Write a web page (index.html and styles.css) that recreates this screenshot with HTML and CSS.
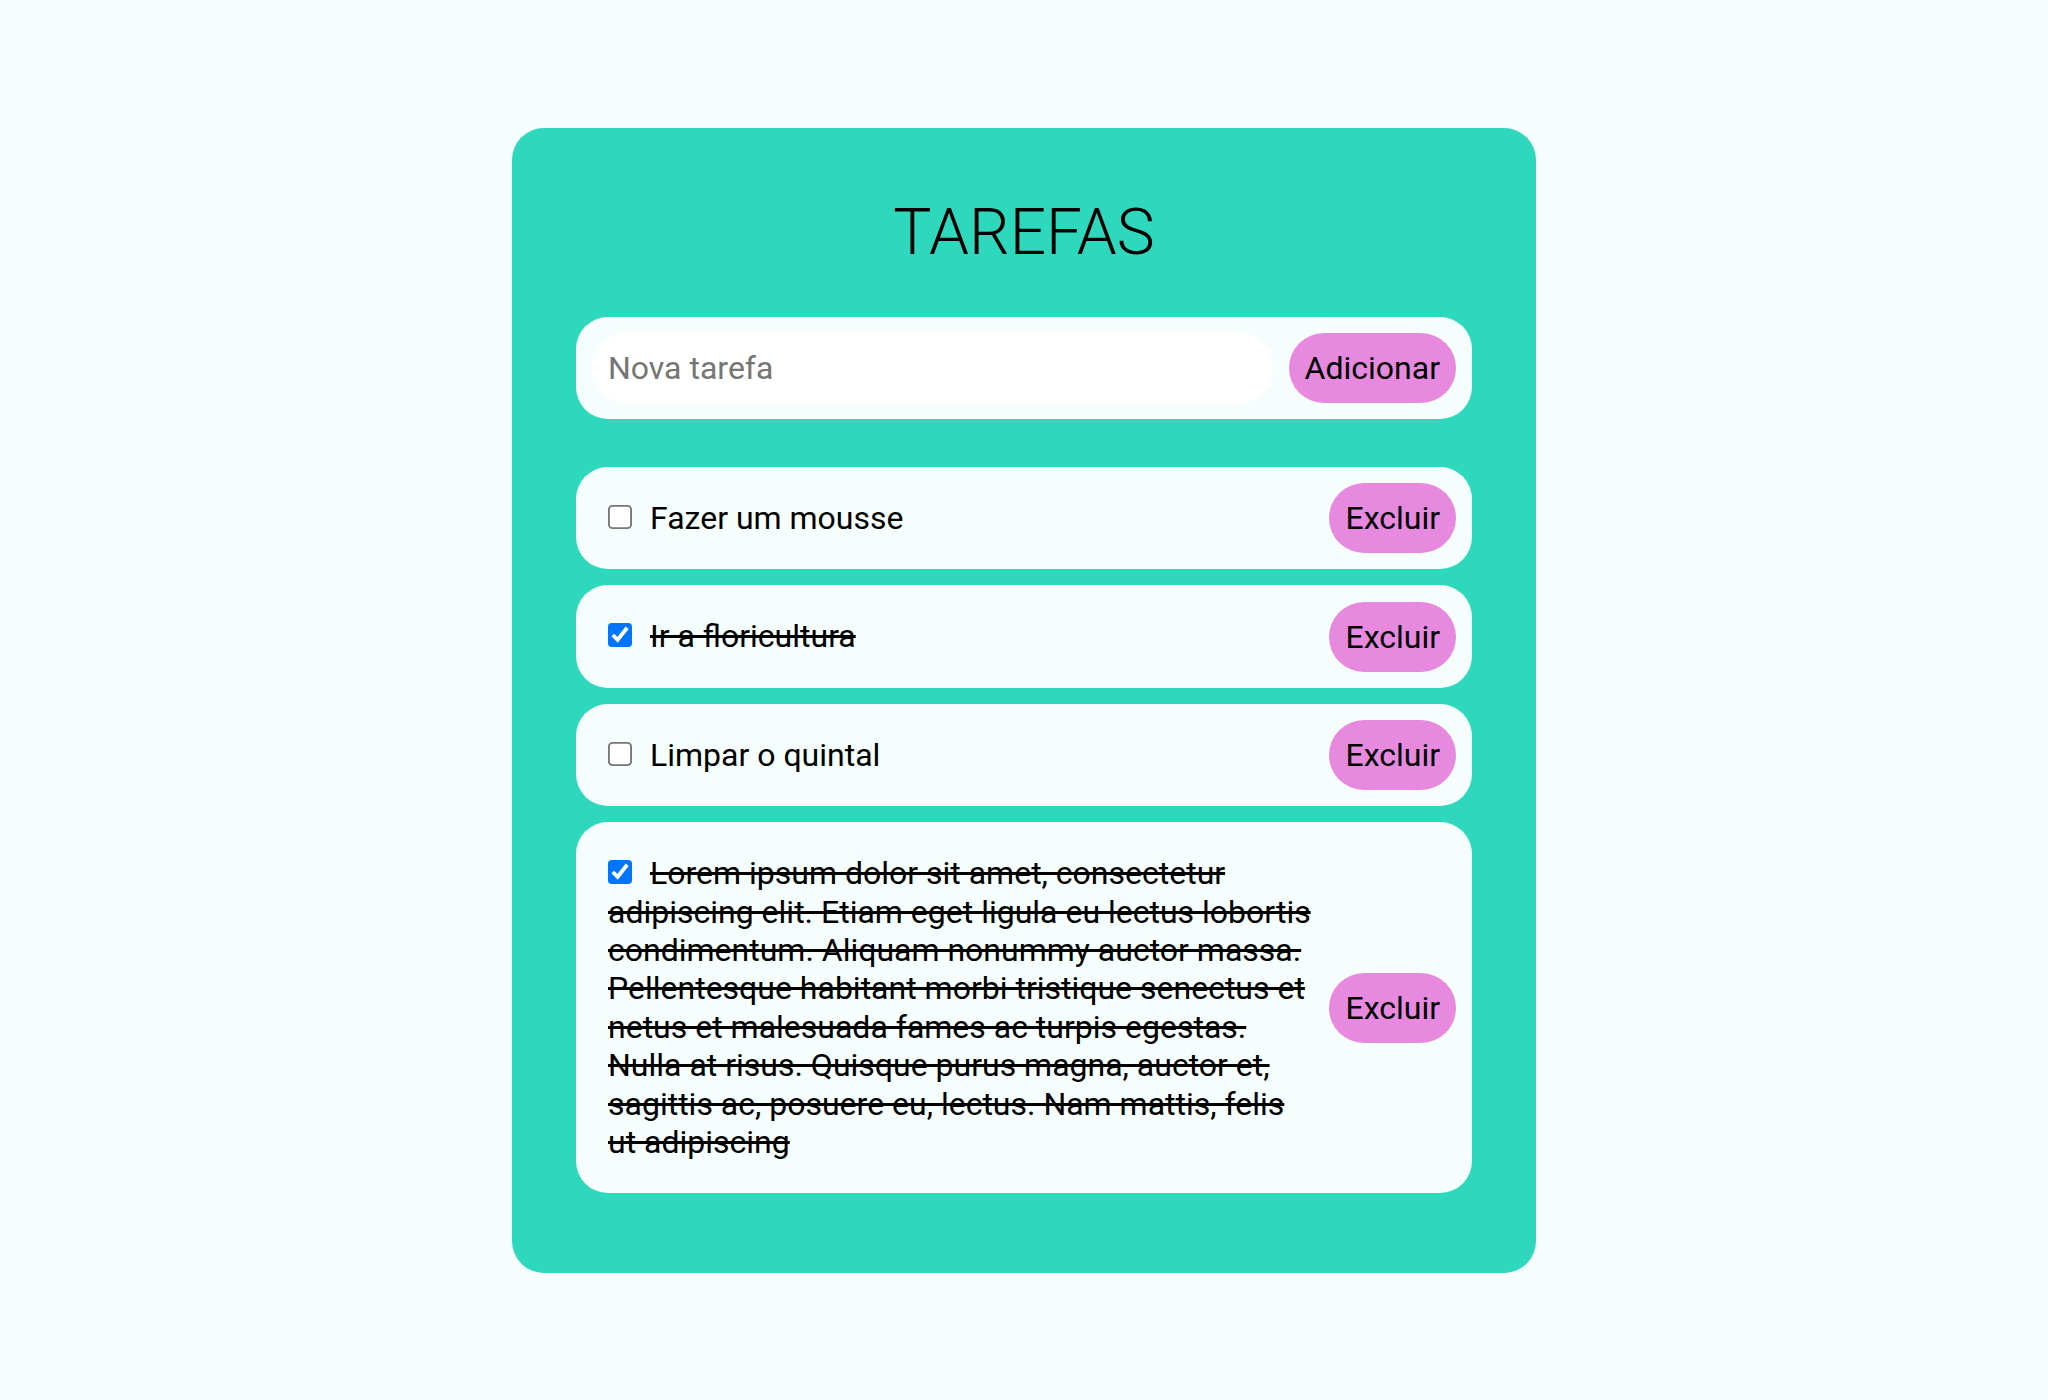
FILE: index.html
```html
<!DOCTYPE html>
<html lang="pt-BR">
<head>
  <meta charset="UTF-8">
  <meta name="viewport" content="width=device-width, initial-scale=1.0">
  <title>Tarefas</title>
  <link rel="stylesheet" href="styles.css">
</head>
<body>
  <main class="app">
    <h1>TAREFAS</h1>

    <form class="new-task">
      <input type="text" class="new-task-input" placeholder="Nova tarefa">
      <button type="button" class="pill-btn">Adicionar</button>
    </form>

    <ul class="task-list">
      <li class="task-item">
        <label class="task-label"><input type="checkbox"><span class="task-text">Fazer um mousse</span></label>
        <button type="button" class="pill-btn">Excluir</button>
      </li>
      <li class="task-item done">
        <label class="task-label"><input type="checkbox" checked><span class="task-text">Ir a floricultura</span></label>
        <button type="button" class="pill-btn">Excluir</button>
      </li>
      <li class="task-item">
        <label class="task-label"><input type="checkbox"><span class="task-text">Limpar o quintal</span></label>
        <button type="button" class="pill-btn">Excluir</button>
      </li>
      <li class="task-item done">
        <label class="task-label"><input type="checkbox" checked><span class="task-text">Lorem ipsum dolor sit amet, consectetur adipiscing elit. Etiam eget ligula eu lectus lobortis condimentum. Aliquam nonummy auctor massa. Pellentesque habitant morbi tristique senectus et netus et malesuada fames ac turpis egestas. Nulla at risus. Quisque purus magna, auctor et, sagittis ac, posuere eu, lectus. Nam mattis, felis ut adipiscing</span></label>
        <button type="button" class="pill-btn">Excluir</button>
      </li>
    </ul>
  </main>
</body>
</html>
```

FILE: styles.css
```css
body {
  margin: 0;
  padding: 128px 0;
  background-color: #f6fefd;
  font-family: Roboto, 'Liberation Sans', sans-serif;
  color: #000;
}

.app {
  width: 1024px;
  box-sizing: border-box;
  margin: 0 auto;
  padding: 64px;
  background: #2ed8bc;
  border-radius: 32px;
}

h1 {
  margin: 0 0 47px;
  padding-top: 3px;
  font-size: 64px;
  font-weight: 300;
  text-align: center;
}

.new-task {
  display: flex;
  gap: 16px;
  padding: 16px;
  margin: 0 0 48px;
  background: #f6fefd;
  border-radius: 32px;
}

.new-task-input {
  flex: 1;
  min-width: 0;
  padding: 16px;
  border: none;
  border-radius: 35px;
  background: #fff;
  font-family: inherit;
  font-size: 32px;
  outline: none;
}

.new-task-input::placeholder {
  color: #757575;
}

.pill-btn {
  flex: none;
  padding: 16px;
  border: none;
  border-radius: 35px;
  background: #e889e0;
  color: #000;
  font-family: inherit;
  font-size: 32px;
  cursor: pointer;
}

.task-list {
  list-style: none;
  margin: 0;
  padding: 0;
}

.task-item {
  display: flex;
  align-items: center;
  padding: 16px;
  margin-bottom: 16px;
  background: #f6fefd;
  border-radius: 32px;
}

.task-label {
  flex: 1;
  margin: 16px;
  font-size: 32px;
  line-height: 38.4px;
}

/* native checkbox blown up, border and tick included */
.task-label input {
  zoom: 1.846;
  margin: 1px 9.75px 1px 0;
}

.done .task-text {
  text-decoration: line-through;
}
```
